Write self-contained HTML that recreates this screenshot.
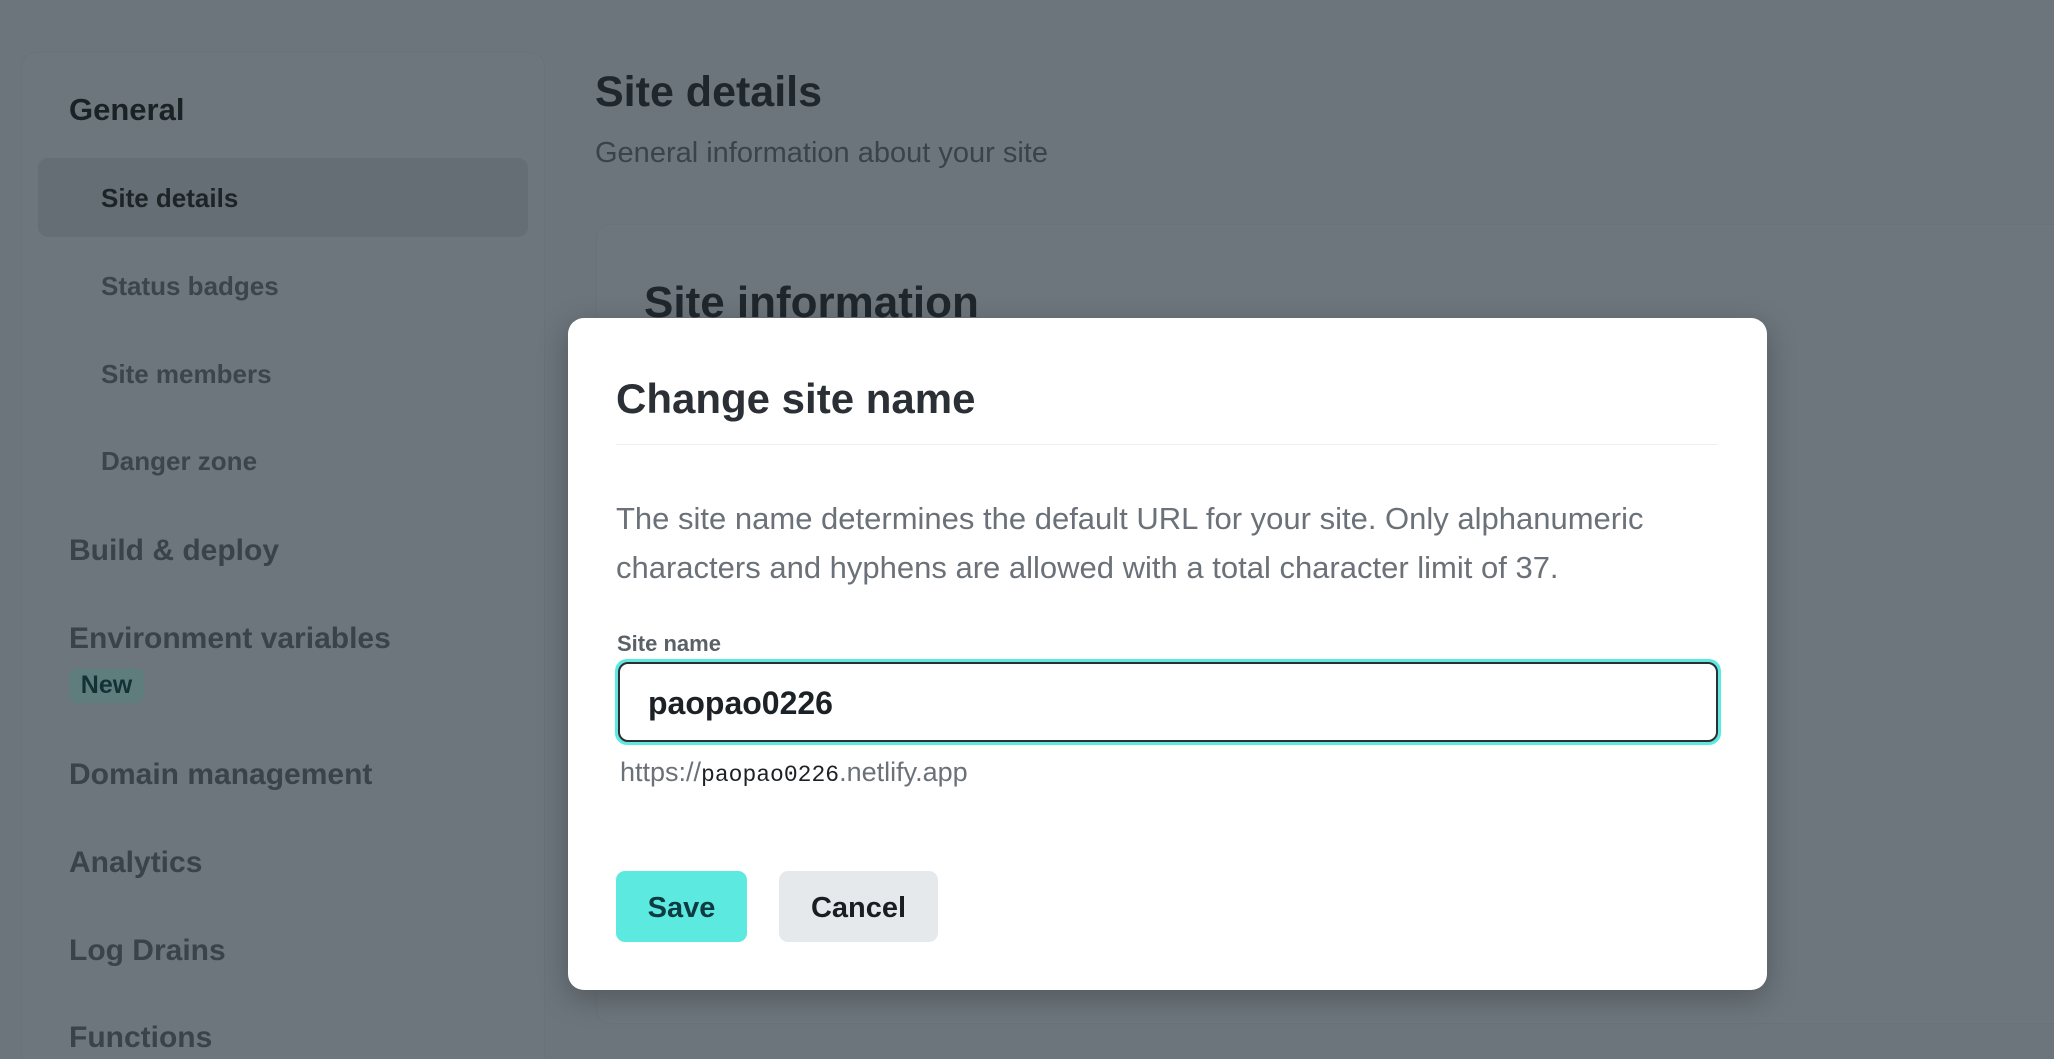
<!DOCTYPE html>
<html><head><meta charset="utf-8"><style>
*{box-sizing:border-box;margin:0;padding:0}
html,body{width:2054px;height:1059px;overflow:hidden}
body{background:#6c757c;font-family:"Liberation Sans",sans-serif;position:relative}
.abs{position:absolute;white-space:nowrap}
.side{position:absolute;left:21px;top:52px;width:524px;height:1007px;border:1px solid #66737a;border-bottom:none;border-radius:14px 14px 0 0;background:#6d767d}
.hl{position:absolute;left:38px;top:158px;width:490px;height:79px;border-radius:10px;background:#646e74}
.sub{font-size:26px;font-weight:bold;color:#3c454b}
.top{font-size:30px;font-weight:bold;color:#3a4349}
.card{position:absolute;left:596px;top:224px;width:1458px;height:800px;border:1px solid #66737a;border-right:none;border-radius:14px 0 0 14px;background:#6d767d}
.modal{position:absolute;left:568px;top:318px;width:1199px;height:672px;background:#fff;border-radius:16px;box-shadow:0 8px 30px rgba(0,0,0,.25)}
</style></head><body>
<div class="side"></div>
<div class="hl"></div>
<div class="abs" style="left:69px;top:92px;font-size:31px;font-weight:bold;color:#1b2226">General</div>
<div class="abs sub" style="left:101px;top:183px;color:#1d2428">Site details</div>
<div class="abs sub" style="left:101px;top:271px">Status badges</div>
<div class="abs sub" style="left:101px;top:359px">Site members</div>
<div class="abs sub" style="left:101px;top:446px">Danger zone</div>
<div class="abs top" style="left:69px;top:534px">Build &amp; deploy</div>
<div class="abs top" style="left:69px;top:622px">Environment variables</div>
<div class="abs" style="left:69px;top:668px;width:75px;height:35px;border-radius:7px;background:#5f7d7c;color:#123236;font-weight:bold;font-size:25px;text-align:center;line-height:35px">New</div>
<div class="abs top" style="left:69px;top:758px">Domain management</div>
<div class="abs top" style="left:69px;top:846px">Analytics</div>
<div class="abs top" style="left:69px;top:934px">Log Drains</div>
<div class="abs top" style="left:69px;top:1021px">Functions</div>

<div class="abs" style="left:595px;top:68px;font-size:43px;font-weight:bold;color:#20272c">Site details</div>
<div class="abs" style="left:595px;top:137px;font-size:29px;color:#3a4349">General information about your site</div>
<div class="card"></div>
<div class="abs" style="left:644px;top:278px;font-size:44px;font-weight:bold;color:#20272c">Site information</div>

<div class="modal"></div>
<div class="abs" style="left:616px;top:375px;font-size:42px;font-weight:bold;color:#2b3036">Change site name</div>
<div class="abs" style="left:616px;top:444px;width:1102px;height:1px;background:#eef0f2"></div>
<div class="abs" style="left:616px;top:494px;font-size:31px;line-height:49px;color:#6b7178;white-space:normal;width:1080px">The site name determines the default URL for your site. Only alphanumeric characters and hyphens are allowed with a total character limit of 37.</div>
<div class="abs" style="left:617px;top:631px;font-size:22px;font-weight:bold;color:#5a6067">Site name</div>
<div class="abs" style="left:615px;top:659px;width:1106px;height:86px;border-radius:12px;background:#5ce9df"></div>
<div class="abs" style="left:618px;top:662px;width:1100px;height:80px;border-radius:10px;background:#fff;border:2px solid #2b2f33"></div>
<div class="abs" style="left:648px;top:685px;font-size:32px;font-weight:bold;color:#1c2126">paopao0226</div>
<div class="abs" style="left:620px;top:757px;font-size:27px;color:#6b7178">https://<span style="font-family:'Liberation Mono',monospace;font-size:23px;color:#1c2126">paopao0226</span>.netlify.app</div>
<div class="abs" style="left:616px;top:871px;width:131px;height:71px;border-radius:9px;background:#5ce9df;color:#0e3a42;font-size:29px;font-weight:bold;text-align:center;line-height:74px">Save</div>
<div class="abs" style="left:779px;top:871px;width:159px;height:71px;border-radius:9px;background:#e6e9ec;color:#1a1d21;font-size:29px;font-weight:bold;text-align:center;line-height:74px">Cancel</div>
</body></html>
